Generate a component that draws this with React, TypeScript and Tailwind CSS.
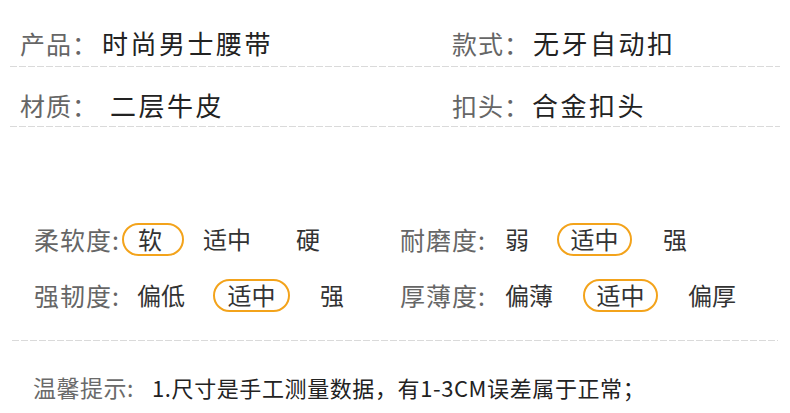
import React from "react";

const font = "font-['Noto_Sans_CJK_SC','Noto_Sans',sans-serif]";

function Dashed({ className }: { className?: string }) {
  return (
    <div
      className={
        "h-px bg-[linear-gradient(to_right,#dadada_0_7px,transparent_7px_9px)] bg-[length:9px_1px] bg-repeat-x " +
        (className ?? "")
      }
    />
  );
}

function Pill({ children, className }: { children: React.ReactNode; className?: string }) {
  return (
    <span
      className={
        "flex h-[33px] items-center justify-center rounded-full border-2 border-[#f3a31b] text-[#333] " +
        (className ?? "")
      }
    >
      {children}
    </span>
  );
}

function InfoCell({ label, value, valueClass }: { label: string; value: string; valueClass?: string }) {
  return (
    <div className="flex items-center leading-[30px]">
      <span className="w-[82px] text-[25px] tracking-[1px] text-[#666]">{label}</span>
      <span className={"text-[26px] tracking-[2.5px] text-[#222] " + (valueClass ?? "")}>{value}</span>
    </div>
  );
}

export default function App() {
  return (
    <div className={"w-[790px] h-[413px] overflow-hidden bg-white " + font}>
      {/* basic info */}
      <div className="px-[10px]">
        <div className="grid grid-cols-[432px_1fr] pl-[10px] pt-[28px] pb-[8px]">
          <InfoCell label="产品：" value="时尚男士腰带" />
          <InfoCell label="款式：" value="无牙自动扣" valueClass="-ml-[1px]" />
        </div>
        <Dashed />
        <div className="grid grid-cols-[432px_1fr] pl-[10px] pt-[23px] pb-[6px]">
          <InfoCell label="材质：" value="二层牛皮" valueClass="ml-[8px]" />
          <InfoCell label="扣头：" value="合金扣头" valueClass="-ml-[2px]" />
        </div>
        <Dashed />
      </div>

      {/* feel ratings */}
      <div className="grid grid-cols-[366px_1fr] pl-[34px] pt-[95px] text-[24px] leading-[30px] text-[#333]">
        <div className="flex flex-col gap-[22px]">
          <div className="flex h-[34px] items-center">
            <span className="w-[88px] text-[25px] tracking-[1px] text-[#666]">柔软度:</span>
            <Pill className="w-[62px] pr-[6px]">软</Pill>
            <span className="w-[112px] pl-[19px]">适中</span>
            <span>硬</span>
          </div>
          <div className="flex h-[34px] items-center">
            <span className="w-[103px] text-[25px] tracking-[1px] text-[#666]">强韧度:</span>
            <span className="w-[76px]">偏低</span>
            <Pill className="w-[77px]">适中</Pill>
            <span className="ml-[30px]">强</span>
          </div>
        </div>
        <div className="flex flex-col gap-[22px]">
          <div className="flex h-[34px] items-center">
            <span className="w-[105px] text-[25px] tracking-[1px] text-[#666]">耐磨度:</span>
            <span className="w-[52px]">弱</span>
            <Pill className="w-[75px]">适中</Pill>
            <span className="ml-[31px]">强</span>
          </div>
          <div className="flex h-[34px] items-center">
            <span className="w-[105px] text-[25px] tracking-[1px] text-[#666]">厚薄度:</span>
            <span className="w-[78px]">偏薄</span>
            <Pill className="w-[75px]">适中</Pill>
            <span className="ml-[30px]">偏厚</span>
          </div>
        </div>
      </div>

      <div className="px-[12px] pt-[28px]">
        <Dashed className="bg-[linear-gradient(to_right,#d4d4d4_0_4px,transparent_4px_6px)] bg-[length:6px_1px]" />
      </div>

      {/* note */}
      <div className="flex items-center pl-[33px] pt-[31px] leading-[30px]">
        <span className="w-[119px] text-[23px] tracking-[0.5px] text-[#6a6a6a]">温馨提示:</span>
        <span className="text-[22px] tracking-[0.6px] text-[#222]">1.尺寸是手工测量数据，有1-3CM误差属于正常；</span>
      </div>
    </div>
  );
}
